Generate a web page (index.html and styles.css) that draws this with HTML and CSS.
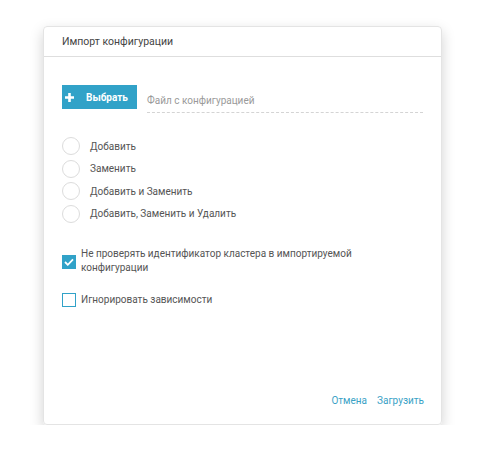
FILE: index.html
```html
<!DOCTYPE html>
<html lang="ru">
<head>
    <meta charset="UTF-8">
    <title>Импорт конфигурации</title>
    <link rel="stylesheet" href="styles.css">
</head>
<body>
    <div class="dialog">
        <div class="dialog-header">Импорт конфигурации</div>
        <div class="dialog-body">
            <div class="file-row">
                <button class="btn-choose">
                    <svg width="9" height="9" viewBox="0 0 9 9"><path d="M3.2 0h2.6v3.2H9v2.6H5.8V9H3.2V5.8H0V3.2h3.2z" fill="#fff"/></svg>
                    Выбрать
                </button>
                <div class="file-input">Файл с конфигурацией</div>
            </div>

            <div class="radios">
                <label class="radio"><span class="circle"></span>Добавить</label>
                <label class="radio"><span class="circle"></span>Заменить</label>
                <label class="radio"><span class="circle"></span>Добавить и Заменить</label>
                <label class="radio"><span class="circle"></span>Добавить, Заменить и Удалить</label>
            </div>

            <label class="check check-first">
                <span class="box box-on">
                    <svg width="10" height="8" viewBox="0 0 10 8"><path d="M1 4l2.8 2.8L9 1.4" stroke="#fff" stroke-width="1.8" fill="none"/></svg>
                </span>
                <span class="check-text">Не проверять идентификатор кластера в импортируемой конфигурации</span>
            </label>
            <label class="check check-second">
                <span class="box"></span>
                <span class="check-text">Игнорировать зависимости</span>
            </label>
        </div>
        <div class="dialog-footer">
            <a class="link" href="#">Отмена</a>
            <a class="link" href="#">Загрузить</a>
        </div>
    </div>
</body>
</html>
```

FILE: styles.css
```css
body {
    margin: 0;
    padding: 26px 0 0 43px;
    background: #fff;
    font-family: Roboto, "Liberation Sans", sans-serif;
    font-size: 10px;
    color: #555;
}

.dialog {
    width: 399px;
    height: 399px;
    box-sizing: border-box;
    border: 1px solid #e4e4e4;
    border-radius: 4px;
    box-shadow: 0 5px 14px rgba(0, 0, 0, 0.18);
    display: flex;
    flex-direction: column;
}

.dialog-header {
    height: 29px;
    line-height: 29px;
    padding-left: 18px;
    border-bottom: 1px solid #dedede;
    color: #444;
    font-size: 10.5px;
}

.dialog-body {
    padding: 28px 18px 0;
}

.file-row {
    display: flex;
}

.btn-choose {
    width: 75px;
    height: 24px;
    border: none;
    background: #31a2c8;
    color: #fff;
    font-family: inherit;
    font-weight: bold;
    font-size: 10px;
    display: flex;
    align-items: center;
    padding: 0 0 0 3px;
    gap: 12px;
}

.file-input {
    flex: 1;
    margin: 4px 0 0 10px;
    height: 23px;
    line-height: 24px;
    border-bottom: 1px dashed #d4d4d4;
    color: #9a9a9a;
}

.radios {
    margin-top: 24px;
    display: flex;
    flex-direction: column;
    gap: 4.6px;
}

.radio {
    display: flex;
    align-items: center;
    gap: 10px;
    height: 18px;
}

.circle {
    width: 16px;
    height: 16px;
    border: 1px solid #dcdcdc;
    border-radius: 50%;
}

.check {
    display: flex;
    align-items: center;
    gap: 5px;
}

.check-first {
    margin-top: 24px;
}

.check-second {
    margin-top: 18px;
}

.box {
    width: 12px;
    height: 12px;
    flex: none;
    border: 1px solid #31a2c8;
    display: flex;
    align-items: center;
    justify-content: center;
}

.box-on {
    background: #31a2c8;
    margin-top: 3px;
}

.check-text {
    line-height: 14px;
    width: 290px;
}

.dialog-footer {
    margin-top: auto;
    display: flex;
    justify-content: flex-end;
    gap: 10px;
    padding: 0 17px 18px;
}

.link {
    color: #3aa2c6;
    text-decoration: none;
}
```
